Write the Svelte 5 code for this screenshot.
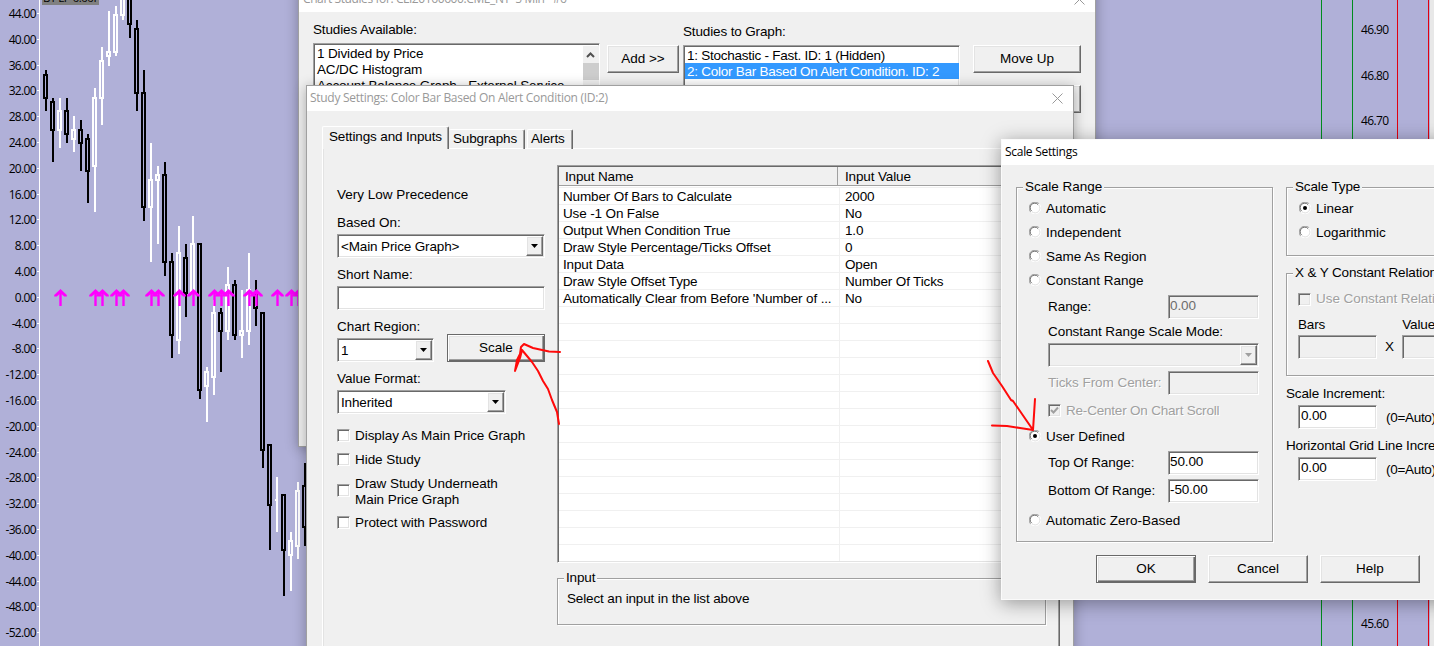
<script>
    // Price scale on the left
    const ticks = Array.from({ length: 25 }, (_, i) => (44 - i * 4).toFixed(2));

    // Price scale on the right
    const prices = Array.from({ length: 14 }, (_, i) => (46.9 - i * 0.1).toFixed(2));

    // Vertical lines behind the right scale
    const rules = [
        { x: 1321, color: "#008c1e" },
        { x: 1352, color: "#008c1e" },
        { x: 1397, color: "#e00010" },
        { x: 1428, color: "#e00010" },
    ];

    // high, body top, body bottom, low, rising
    const candles = [
        [70, 74, 99, 111, 0],
        [98, 101, 131, 162, 0],
        [98, 110, 131, 148, 1],
        [98, 110, 135, 143, 0],
        [116, 129, 140, 152, 1],
        [120, 129, 144, 171, 0],
        [134, 138, 172, 203, 0],
        [88, 97, 167, 212, 1],
        [47, 60, 99, 125, 1],
        [11, 51, 57, 66, 1],
        [6, 14, 53, 56, 1],
        [-10, -10, 16, 20, 1],
        [-10, -10, 25, 38, 0],
        [20, 28, 94, 111, 0],
        [70, 92, 208, 221, 0],
        [143, 179, 208, 262, 1],
        [166, 174, 181, 244, 1],
        [162, 174, 263, 276, 0],
        [253, 261, 336, 358, 0],
        [226, 252, 341, 354, 1],
        [244, 257, 294, 317, 0],
        [216, 243, 292, 294, 1],
        [243, 243, 391, 399, 0],
        [367, 371, 387, 422, 1],
        [300, 312, 378, 395, 1],
        [308, 312, 332, 372, 0],
        [267, 284, 332, 340, 1],
        [280, 284, 336, 340, 0],
        [290, 330, 336, 358, 1],
        [253, 289, 332, 345, 1],
        [280, 293, 309, 326, 0],
        [312, 312, 451, 468, 0],
        [444, 444, 506, 550, 0],
        [477, 499, 501, 532, 1],
        [494, 494, 551, 596, 0],
        [532, 540, 556, 591, 1],
        [482, 490, 547, 559, 1],
        [463, 485, 528, 546, 0],
    ];

    // Alert arrows on the zero line
    const arrows = [60, 95, 102, 116, 123, 151, 158, 179, 193, 214, 221, 228, 249, 256, 277, 291, 298];

    const inputs = [
        ["Number Of Bars to Calculate", "2000"],
        ["Use -1 On False", "No"],
        ["Output When Condition True", "1.0"],
        ["Draw Style Percentage/Ticks Offset", "0"],
        ["Input Data", "Open"],
        ["Draw Style Offset Type", "Number Of Ticks"],
        ["Automatically Clear from Before 'Number of ...", "No"],
        ...Array.from({ length: 15 }, () => ["", ""]),
    ];

    const ranges = ["Automatic", "Independent", "Same As Region", "Constant Range"];
</script>

{#snippet close()}
    <svg class="close" width="11" height="11" viewBox="0 0 11 11">
        <path d="M.5 .5l10 10M10.5 .5l-10 10" />
    </svg>
{/snippet}

{#snippet drop()}
    <span class="drop raised">
        <svg width="7" height="4" viewBox="0 0 7 4"><path d="M0 0h7L3.5 4z" /></svg>
    </span>
{/snippet}

{#snippet radio(label, on)}
    <span class="radio">
        <svg width="12" height="12" viewBox="0 0 12 12">
            <circle cx="6" cy="6" r="5" fill="#fff" />
            <path d="M1.8 10.2A5.5 5.5 0 0 1 10.2 1.8" stroke="#a0a0a0" />
            <path d="M2.5 9A4.5 4.5 0 0 1 9 2.5" stroke="#696969" />
            <path d="M10.2 1.8A5.5 5.5 0 0 1 1.8 10.2" stroke="#fff" />
            <path d="M9.5 3A4.5 4.5 0 0 1 3 9.5" stroke="#e3e3e3" />
            {#if on}<circle cx="6" cy="6" r="2" fill="#000" />{/if}
        </svg>
        <span>{label}</span>
    </span>
{/snippet}

<div class="desktop">
    <!-- Chart -->
    <svg class="chart" width="1434" height="646" shape-rendering="crispEdges">
        <rect x="1430" y="0" width="4" height="646" fill="#e8e8e8" />
        {#each rules as { x, color }}
            <rect {x} y="0" width="1" height="646" fill={color} />
        {/each}
        <rect x="39" y="0" width="1" height="646" fill="#fff" />
        {#each ticks as _, i}
            <rect x="37" y={Math.round(13 + i * 25.8)} width="2" height="1" fill="#fff" />
        {/each}
        {#each candles as [high, top, bottom, low, up], i}
            <g fill={up ? "#fff" : "#000"}>
                <rect x={45 + i * 7} y={high} width="2" height={top - high} />
                <rect x={45 + i * 7} y={bottom} width="2" height={low - bottom} />
                {#if i === 33}
                    <rect x="275" y="499" width="3" height="2" />
                {:else}
                    <path
                        d="M{43 + i * 7} {top}h5v{bottom - top}h-5zm2 2v{bottom - top - 4}h1v{-(bottom - top - 4)}z"
                        fill-rule="evenodd"
                    />
                {/if}
            </g>
        {/each}
        {#each arrows as x}
            <path class="stem" d="M{x + 0.5} 306v-14" />
            <path class="arrow" d="M{x + 0.5} 289l6.3 6v1.6h-2.6l-3.7 -3.4l-3.7 3.4h-2.6v-1.6z" />
        {/each}
    </svg>
    <div class="badge">BT LP 0.00F</div>
    <div class="scale">
        {#each ticks as tick}<span>{tick}</span>{/each}
    </div>
    <div class="prices">
        {#each prices as price}<span>{price}</span>{/each}
    </div>

    <!-- Chart Studies -->
    <section class="window studies">
        <header>
            <span>Chart Studies for: CLI20160600.CME_NY&nbsp; 5 Min&nbsp;&nbsp; #6</span>
            {@render close()}
        </header>
        <div class="panes">
            <div class="available">
                <p>Studies Available:</p>
                <div class="list sunken">
                    <ul>
                        <li>1 Divided by Price</li>
                        <li>AC/DC Histogram</li>
                        <li>Account Balance Graph - External Service</li>
                    </ul>
                    <div class="bar">
                        <svg width="15" height="17" viewBox="0 0 15 17"><path d="M4 11l3.5 -3.5l3.5 3.5" /></svg>
                        <i></i>
                    </div>
                </div>
            </div>
            <button class="raised add">Add &gt;&gt;</button>
            <div class="graphed">
                <p>Studies to Graph:</p>
                <div class="list sunken">
                    <ul>
                        <li>1: Stochastic - Fast. ID: 1 (Hidden)</li>
                        <li class="picked">2: Color Bar Based On Alert Condition. ID: 2</li>
                    </ul>
                </div>
            </div>
            <div class="moves">
                <button class="raised">Move Up</button>
                <button class="raised">Move Down</button>
            </div>
        </div>
    </section>

    <!-- Study Settings -->
    <section class="window study">
        <header>
            <span>Study Settings: Color Bar Based On Alert Condition (ID:2)</span>
            {@render close()}
        </header>
        <nav>
            <span class="tab active">Settings and Inputs</span>
            <span class="tab">Subgraphs</span>
            <span class="tab last">Alerts</span>
        </nav>
        <div class="page">
            <form>
                <p>Very Low Precedence</p>
                <p class="based">Based On:</p>
                <div class="select sunken"><span>&lt;Main Price Graph&gt;</span> {@render drop()}</div>
                <p>Short Name:</p>
                <div class="field sunken"></div>
                <p>Chart Region:</p>
                <div class="region">
                    <div class="select sunken"><span>1</span> {@render drop()}</div>
                    <button type="button" class="raised default">Scale</button>
                </div>
                <p>Value Format:</p>
                <div class="select short sunken"><span>Inherited</span> {@render drop()}</div>
                <div class="checks">
                    <span class="check"><i class="sunken"></i><span>Display As Main Price Graph</span></span>
                    <span class="check"><i class="sunken"></i><span>Hide Study</span></span>
                    <span class="check two"><i class="sunken"></i><span>Draw Study Underneath<br />Main Price Graph</span></span>
                    <span class="check"><i class="sunken"></i><span>Protect with Password</span></span>
                </div>
            </form>
            <div class="right">
                <div class="grid sunken">
                    <div class="head"><span>Input Name</span><span>Input Value</span></div>
                    {#each inputs as [name, value]}
                        <div class="row"><span>{name}</span><span>{value}</span></div>
                    {/each}
                </div>
                <div class="group hint">
                    <span class="legend">Input</span>
                    <p>Select an input in the list above</p>
                </div>
            </div>
        </div>
    </section>

    <!-- Scale Settings -->
    <section class="window scaling">
        <header><span>Scale Settings</span></header>
        <div class="columns">
            <div class="group range">
                <span class="legend">Scale Range</span>
                {#each ranges as label}
                    {@render radio(label, false)}
                {/each}
                <div class="line" style:height="29px"><span>Range:</span><div class="value off sunken">0.00</div></div>
                <div class="line" style:height="20px"><span>Constant Range Scale Mode:</span></div>
                <div class="line" style:height="27px"><div class="select off sunken">{@render drop()}</div></div>
                <div class="line" style:height="29px"><span class="etched">Ticks From Center:</span><div class="value off sunken"></div></div>
                <div class="line check" style:height="26px">
                    <i class="sunken off"><svg width="9" height="9" viewBox="0 0 9 9"><path d="M1 4l2.5 2.5L8 1.5" /></svg></i>
                    <span class="etched">Re-Center On Chart Scroll</span>
                </div>
                <div class="user">{@render radio("User Defined", true)}</div>
                <div class="line" style:height="27px"><span>Top Of Range:</span><div class="value sunken">50.00</div></div>
                <div class="line" style:height="29px"><span>Bottom Of Range:</span><div class="value sunken">-50.00</div></div>
                <div class="zero">{@render radio("Automatic Zero-Based", false)}</div>
            </div>
            <div class="side">
                <div class="group type">
                    <span class="legend">Scale Type</span>
                    {@render radio("Linear", true)}
                    {@render radio("Logarithmic", false)}
                </div>
                <div class="group relation">
                    <span class="legend">X &amp; Y Constant Relationship</span>
                    <span class="check"><i class="sunken off"></i><span class="etched">Use Constant Relationship</span></span>
                    <div class="pair names"><span>Bars</span><span>Value</span></div>
                    <div class="pair">
                        <div class="small off sunken"></div>
                        <span>X</span>
                        <div class="small off sunken"></div>
                    </div>
                </div>
                <p>Scale Increment:</p>
                <div class="pair auto"><div class="small sunken">0.00</div><span>(0=Auto)</span></div>
                <p>Horizontal Grid Line Increment:</p>
                <div class="pair auto"><div class="small sunken">0.00</div><span>(0=Auto)</span></div>
            </div>
        </div>
        <footer>
            <button class="raised default">OK</button>
            <button class="raised">Cancel</button>
            <button class="raised">Help</button>
        </footer>
    </section>

    <!-- Hand drawn notes -->
    <svg class="notes" width="1434" height="646">
        <path d="M560 352L549 351.5L533 348L524 344L521 347L520 354L517 360L515 371L520 358L522 350L532 362L538 371L543 381L548 389L552 400L557 412L559 424" />
        <path d="M988 361L993 373L1002 386L1011 400L1013 401L1022 414L1033 430L1035 399L1034 415L1033 430L1020 428L1007 426L992 425.5" />
    </svg>
</div>

<style>
    :global(body) {
        overflow: hidden;
    }
    .desktop {
        position: relative;
        width: 1434px;
        height: 646px;
        overflow: hidden;
        background: #b0b0d8;
        color: #000;
        font: 13.5px/16px "Liberation Sans", Arial, sans-serif;
        letter-spacing: -0.14px;
        white-space: nowrap;
    }
    .desktop :global(*) {
        box-sizing: border-box;
    }
    p,
    ul {
        margin: 0;
        padding: 0;
        list-style: none;
    }

    /* Chart */
    .chart,
    .notes {
        position: absolute;
        top: 0;
        left: 0;
    }
    .arrow,
    .stem {
        fill: #ff00ff;
        shape-rendering: auto;
    }
    .stem {
        stroke: #ff00ff;
        stroke-width: 2.4;
    }
    .badge {
        position: absolute;
        top: -10px;
        left: 42px;
        width: 57px;
        height: 15px;
        padding-left: 1px;
        background: #808080;
        font: 11.5px/15px "Open Sans", sans-serif;
        letter-spacing: -0.5px;
    }
    .scale,
    .prices {
        position: absolute;
        display: flex;
        flex-direction: column;
        font-family: "Open Sans", "Noto Sans", sans-serif;
        font-size: 12px;
        letter-spacing: -0.65px;
    }
    .scale {
        top: 1px;
        left: 0;
        width: 36px;
        text-align: right;
    }
    .scale span {
        height: 25.8px;
        line-height: 25.8px;
    }
    .prices {
        top: 7px;
        left: 1361px;
    }
    .prices span {
        height: 45.7px;
        line-height: 45.7px;
    }

    /* Edges */
    .sunken {
        border: 1px solid;
        border-color: #a0a0a0 #fff #fff #a0a0a0;
        background: #fff;
        box-shadow: inset 1px 1px #696969, inset -1px -1px #e3e3e3;
    }
    .raised {
        border: 1px solid;
        border-color: #fff #696969 #696969 #fff;
        background: #f0f0f0;
        box-shadow: inset -1px -1px #a0a0a0, inset 1px 1px #e3e3e3;
    }
    .raised.default {
        border-color: #696969;
        box-shadow: inset 1px 1px #fff, inset -1px -1px #696969, inset -2px -2px #a0a0a0, inset 2px 2px #e3e3e3;
    }
    .off {
        background: #f0f0f0;
        color: #6d6d6d;
    }
    .etched {
        color: #a0a0a0;
        text-shadow: 1px 1px #fff;
    }
    button {
        height: 28px;
        padding: 0;
        font: inherit;
        letter-spacing: 0;
        color: #000;
    }

    /* Windows */
    .window {
        position: absolute;
        background: #f0f0f0;
        border: 1px solid #a0a0a0;
        box-shadow: 0 2px 12px rgba(0, 0, 0, 0.3);
    }
    header {
        display: flex;
        align-items: center;
        justify-content: space-between;
        height: 26px;
        background: #fff;
        color: #999;
        font-family: "Open Sans", "Noto Sans", sans-serif;
        font-size: 12px;
        letter-spacing: -0.29px;
    }
    header span {
        margin-top: -2px;
    }
    .close path {
        stroke: #999;
        fill: none;
    }
    .studies {
        top: -15px;
        left: 298px;
        width: 798px;
        height: 462px;
    }
    .studies header {
        padding: 0 10px 0 4px;
        letter-spacing: -0.4px;
    }
    .studies header span {
        margin-top: 0;
    }
    .panes {
        display: flex;
        align-items: flex-start;
        padding: 11px 0 0 14px;
    }
    .panes p {
        height: 20px;
        margin-top: -1px;
        margin-bottom: 1px;
    }
    .available {
        width: 287px;
    }
    .list {
        display: flex;
        justify-content: space-between;
        height: 120px;
        padding: 2px 0 1px 3px;
    }
    .bar {
        width: 16px;
        background: #f0f0f0;
    }
    .bar svg {
        display: block;
    }
    .bar path {
        stroke: #505050;
        stroke-width: 2;
        fill: none;
    }
    .bar i {
        display: block;
        height: 17px;
        background: #cdcdcd;
    }
    .add {
        width: 72px;
        margin: 22px 4px 0 7px;
    }
    .graphed {
        width: 277px;
        padding-top: 2px;
    }
    .graphed .list {
        padding: 1px 0 1px 1px;
    }
    .graphed ul {
        width: 100%;
        letter-spacing: -0.25px;
    }
    .graphed li {
        height: 16px;
        padding-left: 2px;
        line-height: 17px;
    }
    .picked {
        background: #3399ff;
        color: #fff;
    }
    .moves {
        display: flex;
        flex-direction: column;
        gap: 12px;
        width: 108px;
        margin: 22px 0 0 13px;
    }

    /* Study settings */
    .study {
        top: 85px;
        left: 306px;
        width: 768px;
        height: 640px;
    }
    .study header {
        height: 25px;
        padding: 0 10px 0 3px;
    }
    nav {
        display: flex;
        align-items: flex-end;
        height: 38px;
        padding: 0 15px;
        background: linear-gradient(#fff, #fff) 141px 37px / 611px 1px no-repeat;
    }
    .tab {
        height: 20px;
        padding: 1px 0 0 4px;
        margin-right: 2px;
        border-top: 1px solid #fff;
        border-right: 1px solid #696969;
        border-radius: 2px 2px 0 0;
        box-shadow: inset -1px 0 #a0a0a0;
    }
    .tab.active {
        width: 127px;
        height: 23px;
        margin-right: 0;
        padding: 2px 0 0 6px;
        border-left: 1px solid #fff;
    }
    .tab.active + .tab {
        width: 76px;
    }
    .tab.last {
        width: 46px;
        padding-left: 3px;
        border-left: 1px solid #fff;
    }
    .page {
        display: flex;
        width: 738px;
        height: 560px;
        margin-left: 15px;
        border-left: 1px solid #fff;
        border-right: 1px solid #696969;
        box-shadow: inset -1px 0 #a0a0a0, inset 1px 0 #e3e3e3;
    }
    form {
        width: 234px;
        padding: 38px 0 0 14px;
    }
    form p {
        letter-spacing: 0;
    }
    form p.based {
        margin-top: 12px;
    }
    .select,
    .field {
        display: flex;
        align-items: center;
        justify-content: space-between;
        width: 208px;
        height: 24px;
        margin: 3px 0 9px;
        padding: 1px 1px 1px 3px;
    }
    .select > span:first-child:not(.drop) {
        padding-top: 1px;
    }
    .drop {
        display: flex;
        align-items: center;
        justify-content: center;
        width: 17px;
        height: 20px;
    }
    .off .drop path {
        fill: #a0a0a0;
    }
    .region {
        display: flex;
    }
    .region .select {
        width: 97px;
    }
    .region button {
        width: 98px;
        height: 28px;
        margin: -1px 0 0 13px;
    }
    .select.short {
        width: 169px;
    }
    .check {
        display: flex;
        align-items: center;
        height: 24px;
        letter-spacing: -0.06px;
    }
    .checks span span {
        padding-top: 2px;
    }
    .check.two {
        height: 39px;
    }
    .check i {
        flex: none;
        width: 13px;
        height: 13px;
        margin-right: 5px;
    }
    .right {
        width: 489px;
        padding-top: 16px;
    }
    .grid {
        height: 398px;
        overflow: hidden;
        padding: 1px;
    }
    .head,
    .row {
        display: grid;
        grid-template-columns: 281px 1fr;
        height: 17px;
        line-height: 18px;
    }
    .head {
        height: 19px;
        margin-bottom: 1px;
        line-height: 19px;
        background: #f0f0f0;
        border-bottom: 1px solid #a0a0a0;
    }
    .head span {
        padding-left: 5px;
    }
    .head span:first-child {
        width: 279px;
        padding-left: 6px;
        border-right: 1px solid #a0a0a0;
    }
    .row {
        border-top: 1px solid #f0f0f0;
    }
    .row span {
        height: 16px;
        padding-left: 5px;
    }
    .row span:first-child {
        padding-left: 4px;
        border-right: 1px solid #f0f0f0;
    }

    /* Group boxes */
    .group {
        display: flex;
        flex-direction: column;
        border: 1px solid #a0a0a0;
        box-shadow: 1px 1px #fff, inset 1px 1px #fff;
    }
    .legend {
        align-self: flex-start;
        height: 16px;
        margin: -9px 0 0 6px;
        padding: 0 2px;
        background: #f0f0f0;
    }
    .hint {
        height: 47px;
        margin-top: 15px;
    }
    .hint p {
        padding: 5px 0 0 9px;
    }

    /* Scale settings */
    .scaling {
        top: 139px;
        left: 1001px;
        width: 480px;
        height: 461px;
        border-color: #fafafa;
        box-shadow: 0 3px 18px rgba(0, 0, 0, 0.38);
    }
    .scaling header {
        height: 25px;
        padding-left: 3px;
        color: #000;
    }
    .columns {
        display: flex;
        gap: 13px;
        padding: 22px 0 0 14px;
    }
    .range {
        width: 257px;
        height: 355px;
        padding-left: 12px;
    }
    .range .legend {
        margin: -9px 0 1px -6px;
        letter-spacing: 0;
    }
    .radio {
        display: flex;
        align-items: center;
        gap: 5px;
        height: 24px;
        letter-spacing: 0;
    }
    .radio span,
    .line > span {
        padding-top: 1px;
    }
    .radio path {
        fill: none;
    }
    .line {
        display: flex;
        align-items: center;
        justify-content: space-between;
        padding: 0 13px 0 19px;
        letter-spacing: -0.05px;
    }
    .value {
        width: 91px;
        height: 24px;
        padding: 2px 1px;
        letter-spacing: -0.12px;
    }
    .line .select {
        width: 211px;
        flex: none;
        justify-content: flex-end;
        margin: 0;
    }
    .line.check {
        justify-content: flex-start;
        letter-spacing: -0.2px;
    }
    .check path {
        stroke: #a0a0a0;
        stroke-width: 2;
        fill: none;
    }
    .check i svg {
        display: block;
        margin: 1px;
    }
    .user .radio {
        height: 26px;
    }
    .zero .radio {
        height: 30px;
    }
    .side {
        width: 180px;
    }
    .type {
        height: 69px;
        padding-left: 12px;
    }
    .type .legend {
        margin: -9px 0 1px -6px;
    }
    .relation {
        height: 103px;
        margin-top: 17px;
        padding-left: 11px;
    }
    .relation .legend {
        margin-left: -5px;
    }
    .relation .check {
        margin-top: 6px;
    }
    .pair {
        display: flex;
        align-items: center;
        gap: 8px;
    }
    .pair.names {
        height: 22px;
        gap: 77px;
        margin-top: 2px;
        padding-top: 2px;
    }
    .small {
        flex: none;
        width: 79px;
        height: 24px;
        padding: 2px 2px;
    }
    .side p {
        margin-top: 9px;
        padding-top: 1px;
        height: 16px;
    }
    .pair.auto {
        gap: 9px;
        padding: 4px 0 0 12px;
    }
    .pair.auto span {
        padding-top: 1px;
        letter-spacing: -0.3px;
    }
    .pair.auto + p {
        margin-top: 8px;
    }
    footer {
        display: flex;
        gap: 12px;
        padding: 13px 0 0 94px;
    }
    footer button {
        width: 100px;
    }

    .notes path {
        stroke: #ff0a0a;
        stroke-width: 2;
        stroke-linejoin: round;
        stroke-linecap: round;
        fill: none;
    }
</style>
